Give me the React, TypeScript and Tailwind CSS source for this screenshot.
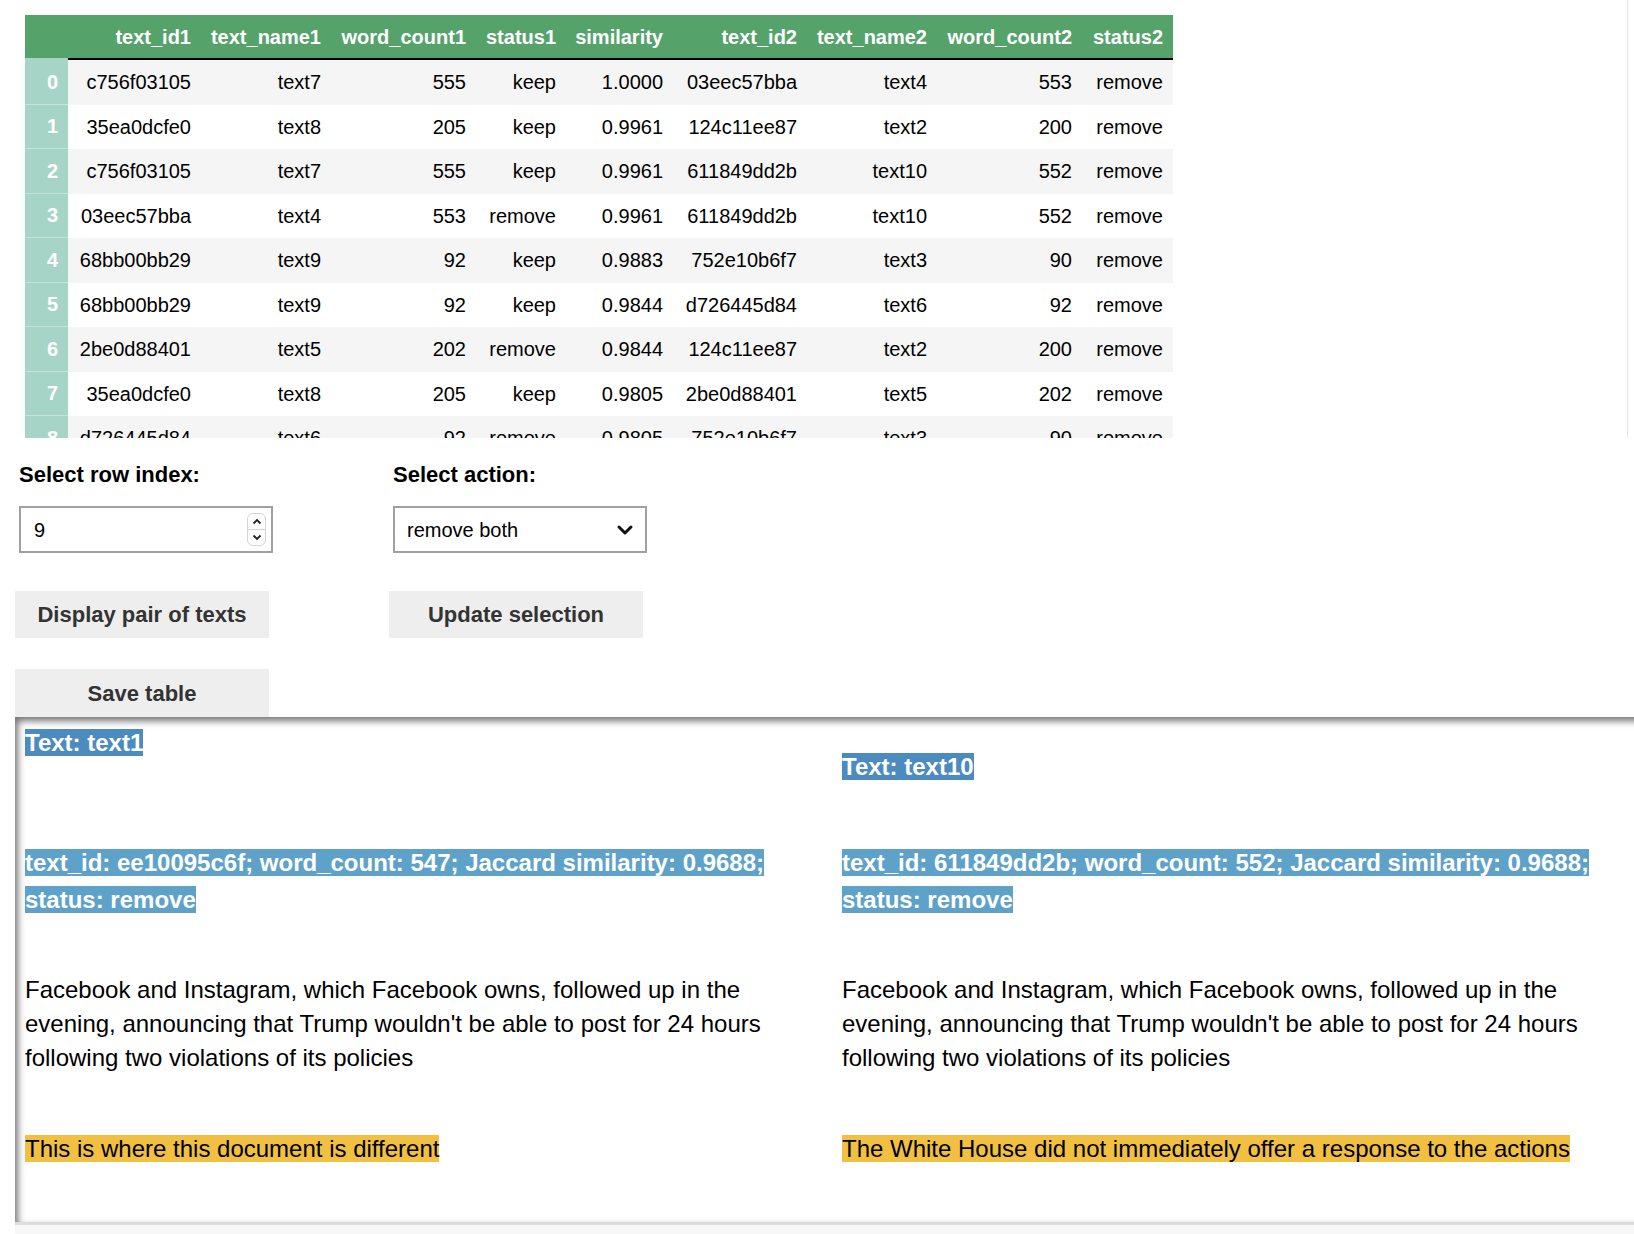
import React from "react";
import { ChevronDown } from "lucide-react";

type Row = [string, string, string, string, string, string, string, string, string];

const columns = [
  "text_id1",
  "text_name1",
  "word_count1",
  "status1",
  "similarity",
  "text_id2",
  "text_name2",
  "word_count2",
  "status2",
];

const rows: Row[] = [
  ["c756f03105", "text7", "555", "keep", "1.0000", "03eec57bba", "text4", "553", "remove"],
  ["35ea0dcfe0", "text8", "205", "keep", "0.9961", "124c11ee87", "text2", "200", "remove"],
  ["c756f03105", "text7", "555", "keep", "0.9961", "611849dd2b", "text10", "552", "remove"],
  ["03eec57bba", "text4", "553", "remove", "0.9961", "611849dd2b", "text10", "552", "remove"],
  ["68bb00bb29", "text9", "92", "keep", "0.9883", "752e10b6f7", "text3", "90", "remove"],
  ["68bb00bb29", "text9", "92", "keep", "0.9844", "d726445d84", "text6", "92", "remove"],
  ["2be0d88401", "text5", "202", "remove", "0.9844", "124c11ee87", "text2", "200", "remove"],
  ["35ea0dcfe0", "text8", "205", "keep", "0.9805", "2be0d88401", "text5", "202", "remove"],
  ["d726445d84", "text6", "92", "remove", "0.9805", "752e10b6f7", "text3", "90", "remove"],
  ["ee10095c6f", "text1", "547", "remove", "0.9688", "611849dd2b", "text10", "552", "remove"],
];

const gridCols =
  "grid grid-cols-[43px_133px_130px_145px_90px_107px_134px_130px_145px_91px]";

const TextPanel = ({
  name,
  id,
  count,
  diff,
  titleOffset,
  infoGap,
}: {
  name: string;
  id: string;
  count: string;
  diff: string;
  titleOffset: string;
  infoGap: string;
}) => (
  <div className="w-[790px] shrink-0">
    <p className={`${titleOffset} text-[24px] font-bold leading-[36px]`}>
      <span className="bg-[#4b8bbe] text-white">Text: {name}</span>
    </p>
    <p className={`${infoGap} text-[24px] font-bold leading-[37px]`}>
      <span className="bg-[#5fa2c9] text-white">
        text_id: {id}; word_count: {count}; Jaccard similarity: 0.9688; status: remove
      </span>
    </p>
    <p className="mt-[55px] text-[24px] leading-[34.4px]">
      Facebook and Instagram, which Facebook owns, followed up in the evening, announcing that
      Trump wouldn't be able to post for 24 hours following two violations of its policies
    </p>
    <p className="mt-[56px] text-[24px] leading-[34.4px]">
      <span className="bg-[#f1c042]">{diff}</span>
    </p>
  </div>
);

export default function App() {
  return (
    <div className="w-[1634px] h-[1234px] overflow-hidden bg-white text-black font-['Liberation_Sans',Arial,sans-serif]">
      {/* dataframe output */}
      <div className="h-[438px] w-[1628px] overflow-hidden border-r border-[#e6e6e6] pl-[25px] pt-[15px]">
        <div className={`${gridCols} text-[20px] font-bold text-white`}>
          <div className="h-[45px] bg-[#55a36b] border-b-2 border-[#a6d5c7]" />
          {columns.map((c) => (
            <div
              key={c}
              className="h-[45px] bg-[#55a36b] border-b-2 border-black flex items-center justify-end pr-[10px]"
            >
              {c}
            </div>
          ))}
        </div>
        {rows.map((row, i) => (
          <div key={i} className={`${gridCols} text-[20px]`}>
            <div className="h-[44.5px] bg-[#a6d5c7] border-b border-[#c4e4da] flex items-center justify-end pr-[10px] font-bold text-white">
              {i}
            </div>
            {row.map((cell, j) => (
              <div
                key={j}
                className={`h-[44.5px] flex items-center justify-end pr-[10px] ${
                  i % 2 === 0 ? "bg-[#f5f5f5]" : "bg-white"
                }`}
              >
                {cell}
              </div>
            ))}
          </div>
        ))}
      </div>

      {/* widgets */}
      <div className="flex pl-[15px]">
        <div className="w-[374px]">
          <div className="pl-[4px] pt-[23px] text-[22px] font-bold leading-[28px]">
            Select row index:
          </div>
          <div className="ml-[4px] mt-[17px] w-[254px] h-[47px] border-2 border-[#a0a0a0] flex items-center justify-between pl-[13px] pr-[5px] text-[20px]">
            <span>9</span>
            <div className="w-[19px] h-[33px] rounded-[6px] border border-[#d4d4d4] flex flex-col">
              <div className="flex-1 flex items-center justify-center border-b border-[#d4d4d4]">
                <svg width="10" height="7" viewBox="0 0 10 7">
                  <path d="M1.5 5.5 L5 2 L8.5 5.5" fill="none" stroke="#222" strokeWidth="1.8" />
                </svg>
              </div>
              <div className="flex-1 flex items-center justify-center">
                <svg width="10" height="7" viewBox="0 0 10 7">
                  <path d="M1.5 1.5 L5 5 L8.5 1.5" fill="none" stroke="#222" strokeWidth="1.8" />
                </svg>
              </div>
            </div>
          </div>
          <button className="mt-[38px] w-[254px] h-[47px] bg-[#eeeeee] text-[22px] font-bold text-[#333]">
            Display pair of texts
          </button>
          <button className="mt-[31px] w-[254px] h-[48px] bg-[#eeeeee] text-[22px] font-bold text-[#333] block">
            Save table
          </button>
        </div>
        <div className="w-[374px]">
          <div className="pl-[4px] pt-[23px] text-[22px] font-bold leading-[28px]">
            Select action:
          </div>
          <div className="ml-[4px] mt-[17px] w-[254px] h-[47px] border-2 border-[#a0a0a0] flex items-center justify-between pl-[12px] pr-[8px] text-[20px]">
            <span>remove both</span>
            <ChevronDown size={24} strokeWidth={3} color="#111" />
          </div>
          <button className="mt-[38px] w-[254px] h-[47px] bg-[#eeeeee] text-[22px] font-bold text-[#333]">
            Update selection
          </button>
        </div>
      </div>

      {/* pair of texts output */}
      <div className="ml-[15px] w-[1640px] h-[508px] border-b-[3px] border-[#dcdcdc] shadow-[inset_3px_4px_7px_rgba(0,0,0,0.55)] flex pl-[10px] pt-[8px]">
        <TextPanel
          name="text1"
          id="ee10095c6f"
          count="547"
          diff="This is where this document is different"
          titleOffset="mt-0"
          infoGap="mt-[82.5px]"
        />
        <div className="w-[27px] shrink-0" />
        <TextPanel
          name="text10"
          id="611849dd2b"
          count="552"
          diff="The White House did not immediately offer a response to the actions"
          titleOffset="mt-[24px]"
          infoGap="mt-[58.5px]"
        />
      </div>
      <div className="ml-[15px] h-[20px] bg-[#f7f7f7]" />
    </div>
  );
}
